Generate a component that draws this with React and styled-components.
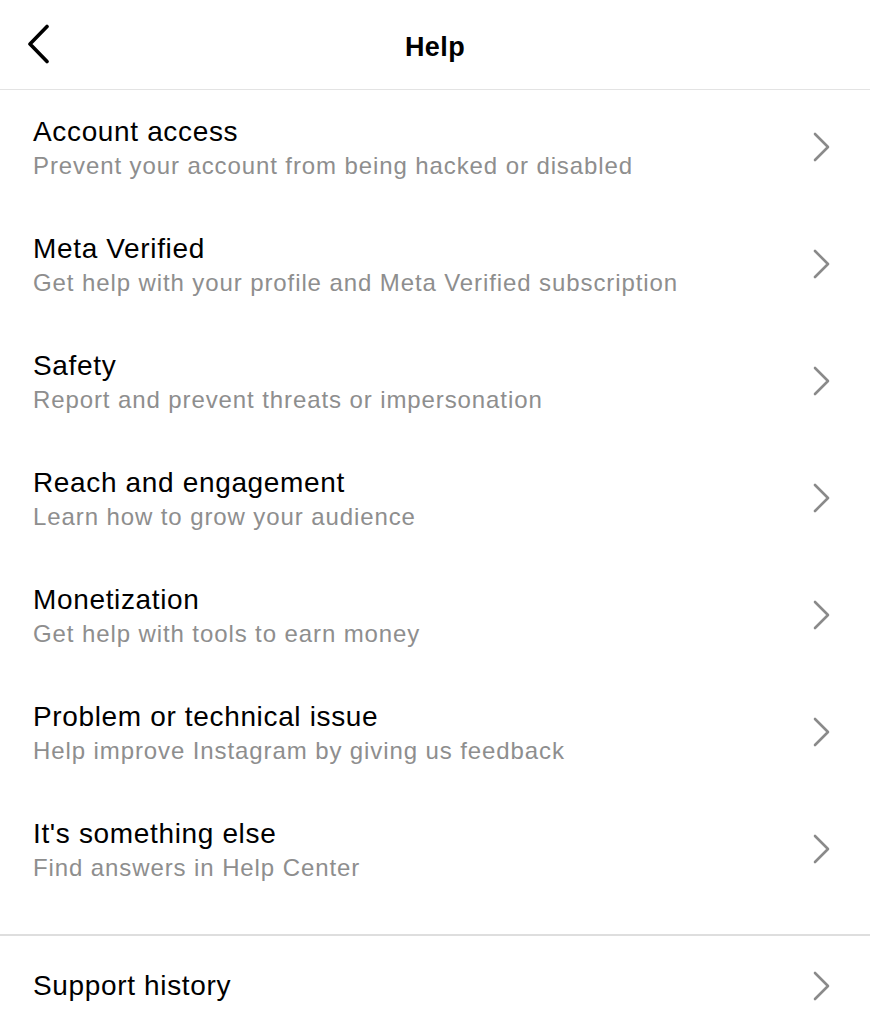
import React from 'react';
import styled, { createGlobalStyle } from 'styled-components';

const GlobalStyle = createGlobalStyle`
  body {
    margin: 0;
    background: #ffffff;
    font-family: "Liberation Sans", Arial, sans-serif;
    -webkit-font-smoothing: antialiased;
  }
`;

const Page = styled.div`
  width: 870px;
  min-height: 1024px;
  background: #ffffff;
  overflow: hidden;
`;

const Header = styled.header`
  height: 89px;
  display: grid;
  grid-template-columns: 90px 1fr 90px;
  align-items: center;
  border-bottom: 1.5px solid #e3e3e3;
`;

const BackButton = styled.button`
  border: 0;
  background: none;
  padding: 0 0 0 26px;
  margin-top: -2px;
  display: flex;
  align-items: center;
  cursor: pointer;
`;

const Title = styled.h1`
  margin: 5px 0 0;
  text-align: center;
  font-size: 27px;
  font-weight: 700;
  letter-spacing: 0.4px;
  color: #000;
`;

const List = styled.div`
  display: flex;
  flex-direction: column;
`;

const Row = styled.div`
  display: flex;
  align-items: center;
  justify-content: space-between;
  padding: ${(p) => (p.single ? '33px 38px 33px 33px' : '25px 38px 28px 33px')};
`;

const TextCol = styled.div`
  display: flex;
  flex-direction: column;
`;

const RowTitle = styled.div`
  font-size: 28px;
  line-height: 34px;
  letter-spacing: 0.65px;
  color: #000;
`;

const RowSub = styled.div`
  margin-top: 3px;
  font-size: 24px;
  line-height: 27px;
  letter-spacing: 0.9px;
  color: #8e8e8e;
`;

const Divider = styled.div`
  margin-top: 25px;
  height: 1.5px;
  background: #dedede;
`;

const BackIcon = () => (
  <svg width="26" height="40" viewBox="0 0 26 40" fill="none">
    <path d="M21 2.5 L4 20 L21 37.5" stroke="#000" strokeWidth="3.6" strokeLinecap="round" strokeLinejoin="round" />
  </svg>
);

const Chevron = () => (
  <svg width="20" height="30" viewBox="0 0 20 30" fill="none">
    <path d="M3 2 L16 15 L3 28" stroke="#8a8a8a" strokeWidth="2.6" strokeLinecap="round" strokeLinejoin="round" />
  </svg>
);

const items = [
  { title: 'Account access', sub: 'Prevent your account from being hacked or disabled' },
  { title: 'Meta Verified', sub: 'Get help with your profile and Meta Verified subscription' },
  { title: 'Safety', sub: 'Report and prevent threats or impersonation' },
  { title: 'Reach and engagement', sub: 'Learn how to grow your audience' },
  { title: 'Monetization', sub: 'Get help with tools to earn money' },
  { title: 'Problem or technical issue', sub: 'Help improve Instagram by giving us feedback' },
  { title: "It's something else", sub: 'Find answers in Help Center' },
];

const App = () => (
  <Page>
    <GlobalStyle />
    <Header>
      <BackButton aria-label="Back">
        <BackIcon />
      </BackButton>
      <Title>Help</Title>
      <div />
    </Header>

    <List>
      {items.map((item) => (
        <Row key={item.title}>
          <TextCol>
            <RowTitle>{item.title}</RowTitle>
            <RowSub>{item.sub}</RowSub>
          </TextCol>
          <Chevron />
        </Row>
      ))}
    </List>

    <Divider />

    <Row single>
      <RowTitle>Support history</RowTitle>
      <Chevron />
    </Row>
  </Page>
);

export default App;
